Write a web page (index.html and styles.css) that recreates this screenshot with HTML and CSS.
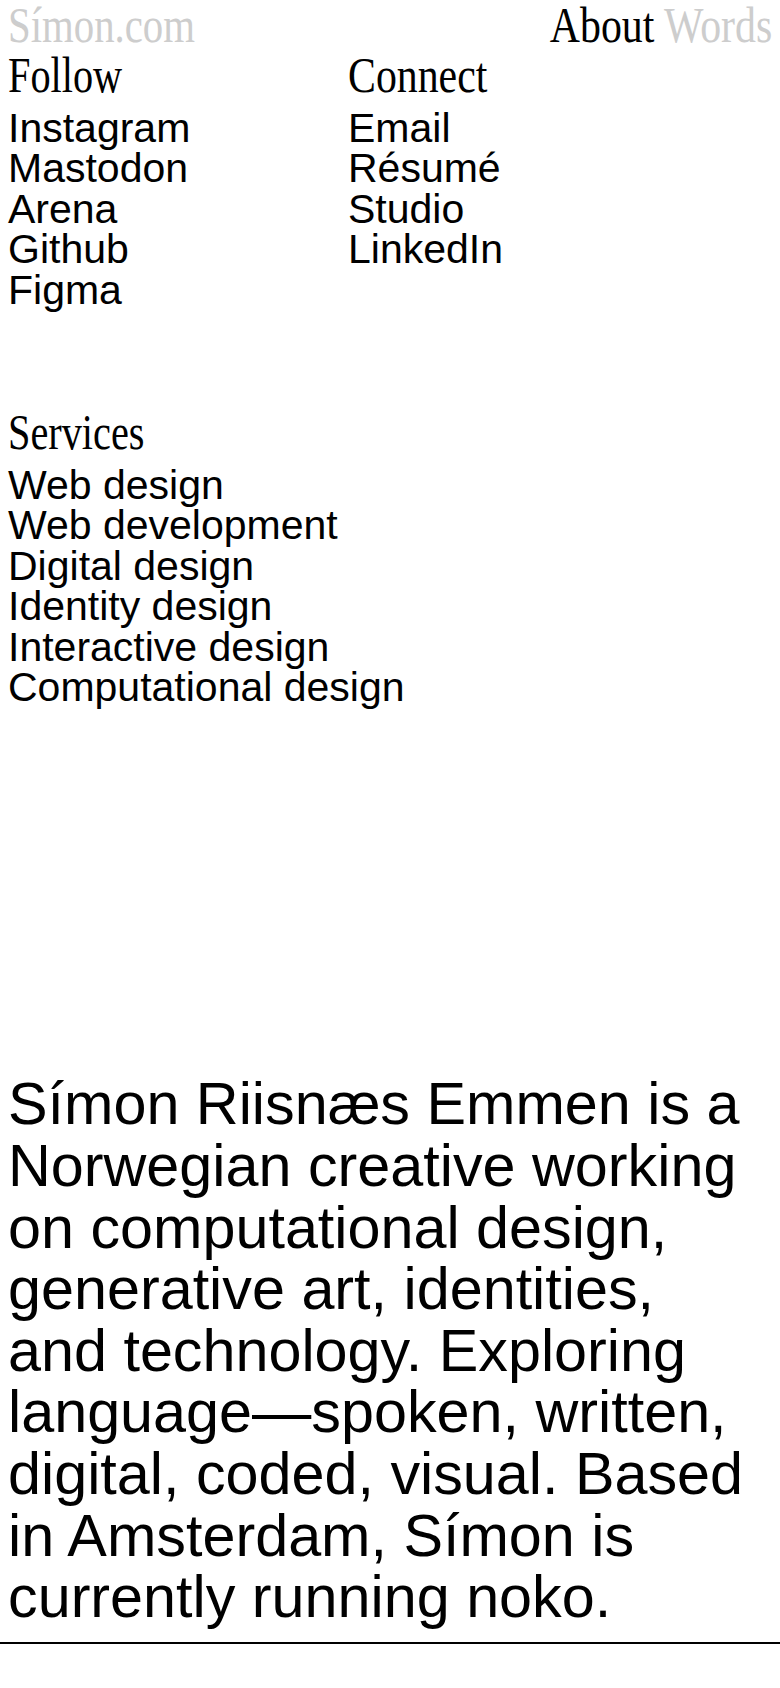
FILE: index.html
```html
<!DOCTYPE html>
<html lang="en">
<head>
<meta charset="utf-8">
<title>Símon.com</title>
<link rel="stylesheet" href="styles.css">
</head>
<body>
<div class="page">
  <header class="top">
    <a class="serif muted logo" href="#"><span class="cond">Símon.com</span></a>
    <nav class="nav serif"><span class="cond wide right"><a href="#">About</a> <a class="muted" href="#">Words</a></span></nav>
  </header>
  <section class="links">
    <div class="col">
      <h2 class="serif"><span class="cond narrow">Follow</span></h2>
      <ul class="list">
        <li>Instagram</li>
        <li>Mastodon</li>
        <li>Arena</li>
        <li>Github</li>
        <li>Figma</li>
      </ul>
    </div>
    <div class="col">
      <h2 class="serif"><span class="cond wide">Connect</span></h2>
      <ul class="list">
        <li>Email</li>
        <li>Résumé</li>
        <li>Studio</li>
        <li>LinkedIn</li>
      </ul>
    </div>
  </section>
  <section class="services">
    <h2 class="serif"><span class="cond narrow">Services</span></h2>
    <ul class="list">
      <li>Web design</li>
      <li>Web development</li>
      <li>Digital design</li>
      <li>Identity design</li>
      <li>Interactive design</li>
      <li>Computational design</li>
    </ul>
  </section>
  <p class="bio">Símon Riisnæs Emmen is a Norwegian creative working on computational design, generative art, identities, and technology. Exploring language—spoken, written, digital, coded, visual. Based in Amsterdam, Símon is currently running noko.</p>
</div>
<hr class="rule">
</body>
</html>
```
FILE: styles.css
```css
html, body {
  margin: 0;
  padding: 0;
  background: #fff;
  color: #000;
}
body {
  font-family: "Liberation Sans", Arial, sans-serif;
}
a {
  color: inherit;
  text-decoration: none;
}
.page {
  padding: 1px 8px 0 8px;
}
.serif {
  font-family: "Liberation Serif", "Times New Roman", serif;
  font-size: 51px;
  line-height: 48px;
  font-weight: normal;
  margin: 0;
}
.cond {
  display: inline-block;
  transform: scaleX(0.80);
  transform-origin: left center;
  white-space: nowrap;
}
.cond.narrow {
  transform: scaleX(0.79);
}
.cond.wide {
  transform: scaleX(0.82);
}
.cond.right {
  transform-origin: right center;
}
.muted {
  color: #cdcdcd;
}
.top {
  display: flex;
  justify-content: space-between;
  align-items: flex-start;
  height: 50px;
}
.logo {
  display: block;
}
.links {
  display: grid;
  grid-template-columns: 340px 1fr;
}
.list {
  list-style: none;
  margin: 9px 0 0 0;
  padding: 0;
  font-size: 41px;
  line-height: 40.4px;
}
.services {
  margin-top: 98px;
}
.bio {
  margin: 366px 0 0 0;
  max-width: 750px;
  font-size: 59.3px;
  line-height: 61.6px;
}
.rule {
  margin: 14px 0 0 0;
  border: 0;
  height: 2px;
  background: #000;
}
```
